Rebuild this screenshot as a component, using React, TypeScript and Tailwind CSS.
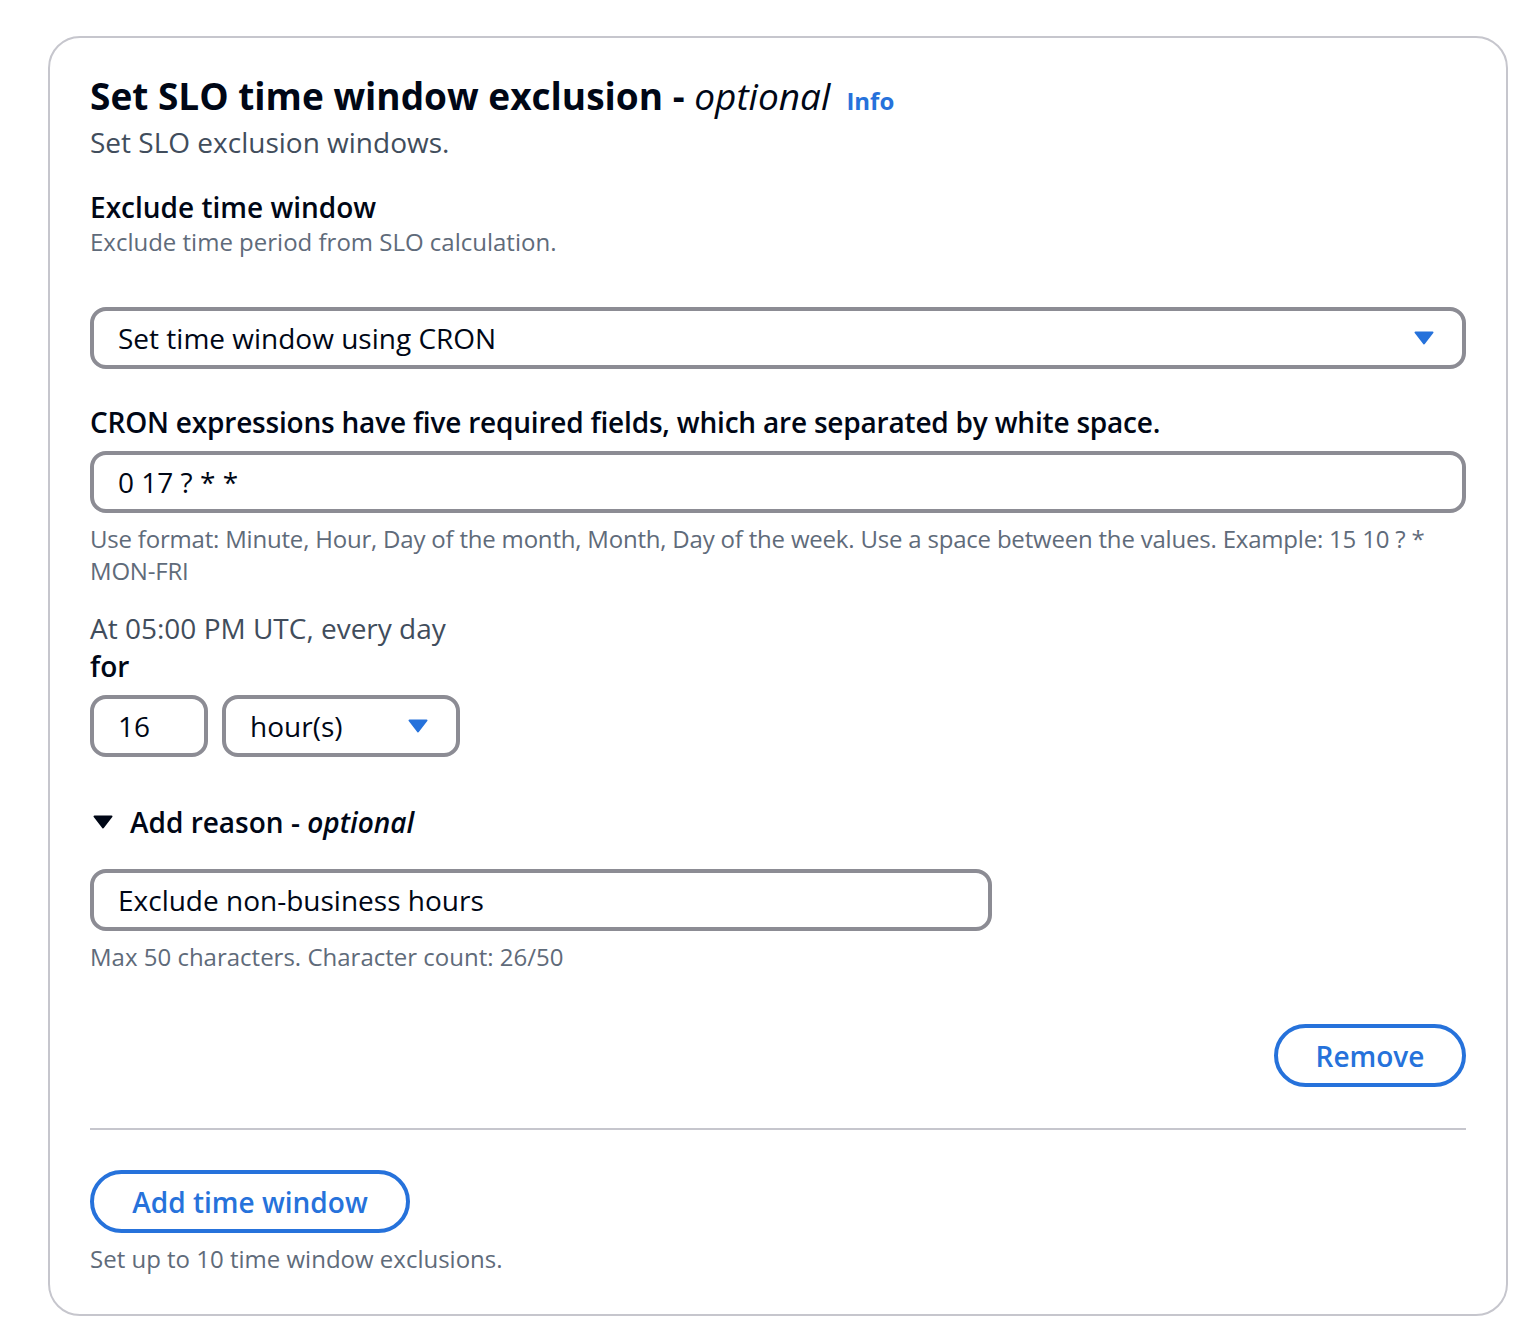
import { useState } from 'react'

const font = { fontFamily: '"Open Sans", "Noto Sans", Arial, sans-serif' }

function Caret({ className }: { className?: string }) {
  return (
    <svg viewBox="0 0 20 14" className={className} aria-hidden>
      <path d="M1.5 1.5h17L10 12.5z" fill="currentColor" stroke="currentColor" strokeWidth="2" strokeLinejoin="round" />
    </svg>
  )
}

export default function App() {
  const [reason, setReason] = useState('Exclude non-business hours')

  return (
    <div className="min-h-screen bg-white" style={font}>
      <div className="ml-[48px] mt-[36px] w-[1460px] rounded-[32px] border-2 border-[#c6c6cd] px-[40px] pt-[36px] pb-[39px] text-[#000716]">
        {/* Header */}
        <div className="flex items-baseline gap-[16px] h-[44px] leading-[44px]">
          <h2 className="text-[37px] font-bold">
            Set SLO time window exclusion - <i className="font-medium">optional</i>
          </h2>
          <span className="text-[24px] font-bold text-[#2672db]">Info</span>
        </div>
        <p className="mt-[6px] text-[28px] leading-[36px] text-[#414d5c]">Set SLO exclusion windows.</p>

        {/* Exclude time window */}
        <div className="mt-[29px] text-[28px] leading-[36px] font-semibold">Exclude time window</div>
        <div className="mt-[1px] text-[24px] leading-[32px] text-[#5f6b7a]">Exclude time period from SLO calculation.</div>

        <button className="mt-[49px] flex h-[62px] w-full items-center justify-between rounded-[16px] border-4 border-[#8c8c94] pl-[24px] pr-[28px] text-left text-[28px]">
          <span>Set time window using CRON</span>
          <Caret className="h-[14px] w-[20px] text-[#2672db]" />
        </button>

        <div className="mt-[35px] text-[28px] leading-[36px] font-semibold tracking-[-0.2px]">
          CRON expressions have five required fields, which are separated by white space.
        </div>
        <div className="mt-[11px] flex h-[62px] w-full items-center rounded-[16px] border-4 border-[#8c8c94] px-[24px] text-[28px]">
          0 17 ? * *
        </div>
        <div className="mt-[10px] text-[24px] leading-[32px] tracking-[-0.2px] text-[#5f6b7a]">
          Use format: Minute, Hour, Day of the month, Month, Day of the week. Use a space between the values. Example: 15 10 ? * MON-FRI
        </div>

        <div className="mt-[23px] text-[28px] leading-[36px] text-[#414d5c]">At 05:00 PM UTC, every day</div>
        <div className="mt-[2px] text-[28px] leading-[36px] font-semibold">for</div>
        <div className="mt-[11px] flex gap-[14px]">
          <div className="flex h-[62px] w-[118px] items-center rounded-[16px] border-4 border-[#8c8c94] px-[24px] text-[28px]">16</div>
          <button className="flex h-[62px] w-[238px] items-center justify-between rounded-[16px] border-4 border-[#8c8c94] pl-[24px] pr-[28px] text-[28px]">
            <span>hour(s)</span>
            <Caret className="h-[14px] w-[20px] text-[#2672db]" />
          </button>
        </div>

        {/* Reason */}
        <div className="mt-[47px] flex h-[36px] items-center gap-[17px] text-[28px] font-semibold">
          <Caret className="ml-[3px] h-[14px] w-[20px] text-[#000716]" />
          <span>
            Add reason - <i className="font-semibold">optional</i>
          </span>
        </div>
        <input
          value={reason}
          onChange={e => setReason(e.target.value)}
          className="mt-[29px] block h-[62px] w-[902px] rounded-[16px] border-4 border-[#8c8c94] px-[24px] text-[28px] outline-none"
          style={font}
        />
        <div className="mt-[10px] text-[24px] leading-[32px] text-[#5f6b7a]">
          Max 50 characters. Character count: {reason.length}/50
        </div>

        <div className="mt-[51px] flex justify-end">
          <button className="h-[63px] w-[192px] rounded-full border-4 border-[#2672db] text-[28px] font-semibold text-[#2672db]">
            Remove
          </button>
        </div>

        <div className="mt-[41px] h-[2px] bg-[#c6c6cd]" />

        <button className="mt-[40px] h-[63px] w-[320px] rounded-full border-4 border-[#2672db] text-[28px] font-semibold text-[#2672db]">
          Add time window
        </button>
        <div className="mt-[10px] text-[24px] leading-[32px] text-[#5f6b7a]">Set up to 10 time window exclusions.</div>
      </div>
    </div>
  )
}
